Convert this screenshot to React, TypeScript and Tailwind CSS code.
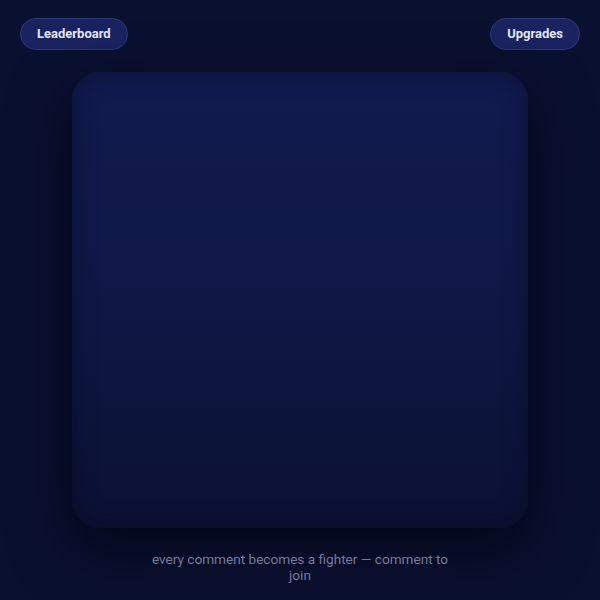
import React from 'react';

const App: React.FC = () => {
  return (
    <div
      className="w-full min-h-[600px] h-[600px] bg-[#0a1130] flex flex-col overflow-hidden"
      style={{ fontFamily: 'Roboto, "Liberation Sans", sans-serif' }}
    >
      <div className="flex items-center justify-between px-5 pt-[18px]">
        <button className="h-8 px-[16px] rounded-full bg-[#1a2360] border border-[#2b387c] text-[#e3e8ff] text-[13px] font-bold">
          Leaderboard
        </button>
        <button className="h-8 px-[16px] rounded-full bg-[#1a2360] border border-[#2b387c] text-[#e3e8ff] text-[13px] font-bold">
          Upgrades
        </button>
      </div>

      <div className="mx-auto mt-[22px] w-[456px] h-[456px] rounded-[28px] bg-gradient-to-b from-[#111b4f] via-[#0f1845] to-[#0b1133] shadow-[0_20px_60px_rgba(2,5,20,0.85),inset_0_0_24px_rgba(5,9,30,0.5)]" />

      <p className="mx-auto mt-[24px] w-[300px] text-center text-[13.6px] leading-[15.5px] text-[#737a9c]">
        every comment becomes a fighter — comment to join
      </p>
    </div>
  );
};

export default App;
